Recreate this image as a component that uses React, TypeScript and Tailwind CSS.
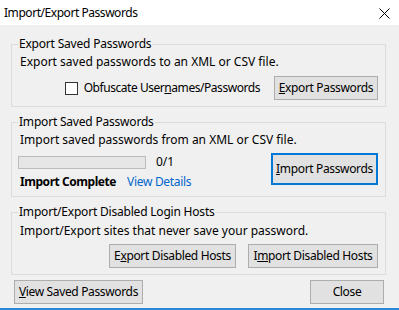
import React from 'react';

const font = { fontFamily: '"Noto Sans", "Open Sans", Arial, sans-serif' };

const Btn: React.FC<{ className?: string; children: React.ReactNode; primary?: boolean }> = ({ className = '', children, primary }) => (
  <button
    className={`flex items-center justify-center bg-[#e1e1e1] text-black text-[12px] leading-none tracking-[-0.35px] ${
      primary ? 'border-2 border-[#0078d7]' : 'border border-[#adadad]'
    } ${className}`}
  >
    {children}
  </button>
);

const Group: React.FC<{ title: string; className?: string; children: React.ReactNode }> = ({ title, className = '', children }) => (
  <fieldset className={`border border-[#dcdcdc] pl-[8px] pr-[7px] pb-[6px] ${className}`}>
    <legend className="-ml-[2px] px-[1px] text-[12px] leading-[16px] tracking-[-0.2px]">{title}</legend>
    {children}
  </fieldset>
);

export default function App() {
  return (
    <div style={font} className="w-[399px] h-[310px] bg-[#f0f0f0] text-black text-[12px] leading-[16px] flex flex-col overflow-hidden">
      <div className="h-[25px] bg-white flex items-center justify-between pl-[4px] pr-[9px] shrink-0">
        <span className="text-[12px] tracking-[-0.45px]">Import/Export Passwords</span>
        <svg width="11" height="11" viewBox="0 0 11 11" className="mt-[1px]">
          <path d="M0.5 0.5 L10.5 10.5 M10.5 0.5 L0.5 10.5" stroke="#000" strokeWidth="1" />
        </svg>
      </div>

      <div className="flex-1 flex flex-col pl-[11px] pr-[13px] pt-[11px]">
        <Group title="Export Saved Passwords">
          <div className="mt-[2px]">Export saved passwords to an XML or CSV file.</div>
          <div className="mt-[6px] flex items-center justify-end">
            <span className="w-[13px] h-[13px] border border-[#333] bg-white mr-[6px]" />
            <span className="tracking-[-0.45px]">
              Obfuscate User<u>n</u>ames/Passwords
            </span>
            <Btn className="ml-[14px] w-[104px] h-[24px]">
              <u>E</u>xport Passwords
            </Btn>
          </div>
        </Group>

        <Group title="Import Saved Passwords" className="mt-[7px]">
          <div className="mt-[2px]">Import saved passwords from an XML or CSV file.</div>
          <div className="mt-[5px] flex items-start justify-between">
            <div className="flex flex-col">
              <div className="flex items-center mt-[1px] -ml-[2px]">
                <div className="w-[128px] h-[13px] bg-[#e6e6e6] border border-[#bcbcbc]" />
                <span className="ml-[10px]">0/1</span>
              </div>
              <div className="flex items-center mt-[4px]">
                <span className="font-bold tracking-[-0.45px]">Import Complete</span>
                <span className="ml-[11px] text-[#0066cc] tracking-[-0.3px]">View Details</span>
              </div>
            </div>
            <Btn primary className="w-[107px] h-[32px]">
              <u>I</u>mport Passwords
            </Btn>
          </div>
        </Group>

        <Group title="Import/Export Disabled Login Hosts" className="mt-[7px]">
          <div className="mt-[3px]">Import/Export sites that never save your password.</div>
          <div className="mt-[5px] flex justify-end gap-[12px]">
            <Btn className="w-[127px] h-[24px]">
              E<u>x</u>port Disabled Hosts
            </Btn>
            <Btn className="w-[130px] h-[24px]">
              I<u>m</u>port Disabled Hosts
            </Btn>
          </div>
        </Group>

        <div className="mt-[5px] flex justify-between pl-[3px] pr-[2px]">
          <Btn className="w-[129px] h-[24px]">
            <u>V</u>iew Saved Passwords
          </Btn>
          <Btn className="w-[74px] h-[24px]">Close</Btn>
        </div>
      </div>
      <div className="h-[2px] bg-[#2b88d8] shrink-0" />
    </div>
  );
}
